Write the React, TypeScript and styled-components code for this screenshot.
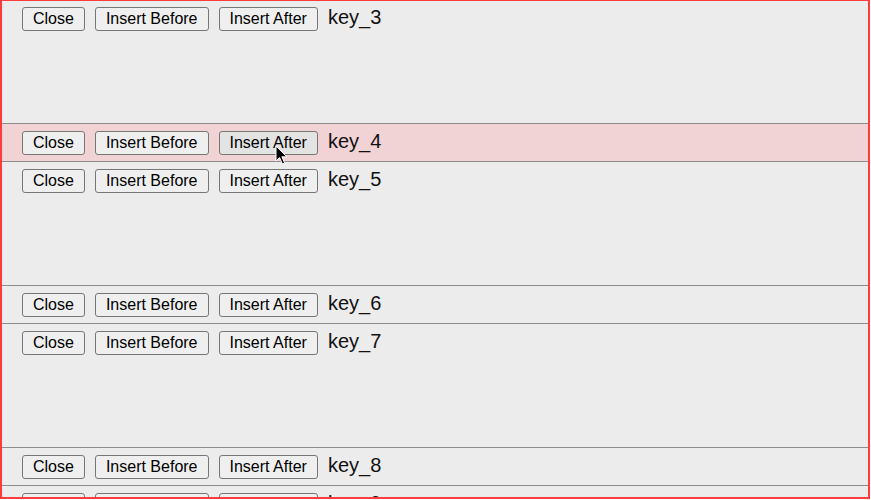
import React, { useLayoutEffect, useRef } from 'react';
import styled, { createGlobalStyle } from 'styled-components';

type Item = {
  key: string;
  tall: boolean;
  active?: boolean;
};

const ITEMS: Item[] = [
  { key: 'key_3', tall: true },
  { key: 'key_4', tall: false, active: true },
  { key: 'key_5', tall: true },
  { key: 'key_6', tall: false },
  { key: 'key_7', tall: true },
  { key: 'key_8', tall: false },
  { key: 'key_9', tall: true },
];

const GlobalStyle = createGlobalStyle`
  html, body {
    margin: 0;
    padding: 0;
    background: #ffffff;
  }
  body {
    font-family: "Liberation Sans", Arial, sans-serif;
  }
`;

// little mouse arrow sitting on top of the hovered button
function Pointer() {
  return (
    <CursorMark width="14" height="21" viewBox="0 0 14 21">
      <path
        d="M1 1 L1 16 L4.6 12.6 L7.4 19 L9.6 18 L6.9 11.8 L11.8 11.8 Z"
        fill="#000"
        stroke="#fff"
        strokeWidth="1"
        strokeLinejoin="round"
      />
    </CursorMark>
  );
}

function Row({ item }: { item: Item }) {
  return (
    <RowBox tall={item.tall} active={!!item.active}>
      <Controls>
        <Button>Close</Button>
        <Button>Insert Before</Button>
        <ButtonSlot>
          <Button hovered={!!item.active}>Insert After</Button>
          {item.active && <Pointer />}
        </ButtonSlot>
        <KeyLabel>{item.key}</KeyLabel>
      </Controls>
    </RowBox>
  );
}

export default function App() {
  const listRef = useRef<HTMLDivElement>(null);

  // the list is scrolled a hair down, like the original
  useLayoutEffect(() => {
    if (listRef.current) listRef.current.scrollTop = 1;
  }, []);

  return (
    <>
      <GlobalStyle />
      <Frame ref={listRef}>
        {ITEMS.map(item => (
          <Row key={item.key} item={item} />
        ))}
      </Frame>
    </>
  );
}

const Frame = styled.div`
  box-sizing: border-box;
  width: 870px;
  height: 499px;
  border: 2px solid #ff3c3c;
  border-top-width: 1px;
  background: #ececec;
  overflow: hidden;
`;

const RowBox = styled.div<{ tall: boolean; active: boolean }>`
  box-sizing: border-box;
  height: ${({ tall }) => (tall ? '124px' : '38px')};
  padding: 6px 20px 0;
  border-bottom: 1px solid #8c8c8c;
  background: ${({ active }) => (active ? '#f1d3d6' : '#ececec')};
`;

const Controls = styled.div`
  display: flex;
  align-items: baseline;
  gap: 10px;
`;

const ButtonSlot = styled.span`
  position: relative;
  display: inline-flex;
`;

const Button = styled.button<{ hovered?: boolean }>`
  box-sizing: border-box;
  height: 24px;
  padding: 2px 10px;
  border: 1px solid #767676;
  border-radius: 3px;
  background: ${({ hovered }) => (hovered ? '#e3e3e3' : '#efefef')};
  color: #000;
  font-family: "Liberation Sans", Arial, sans-serif;
  font-size: 16px;
  line-height: 18px;
  cursor: default;
`;

const KeyLabel = styled.span`
  font-size: 20px;
  color: #111;
`;

const CursorMark = styled.svg`
  position: absolute;
  left: 56px;
  top: 14px;
  pointer-events: none;
`;
